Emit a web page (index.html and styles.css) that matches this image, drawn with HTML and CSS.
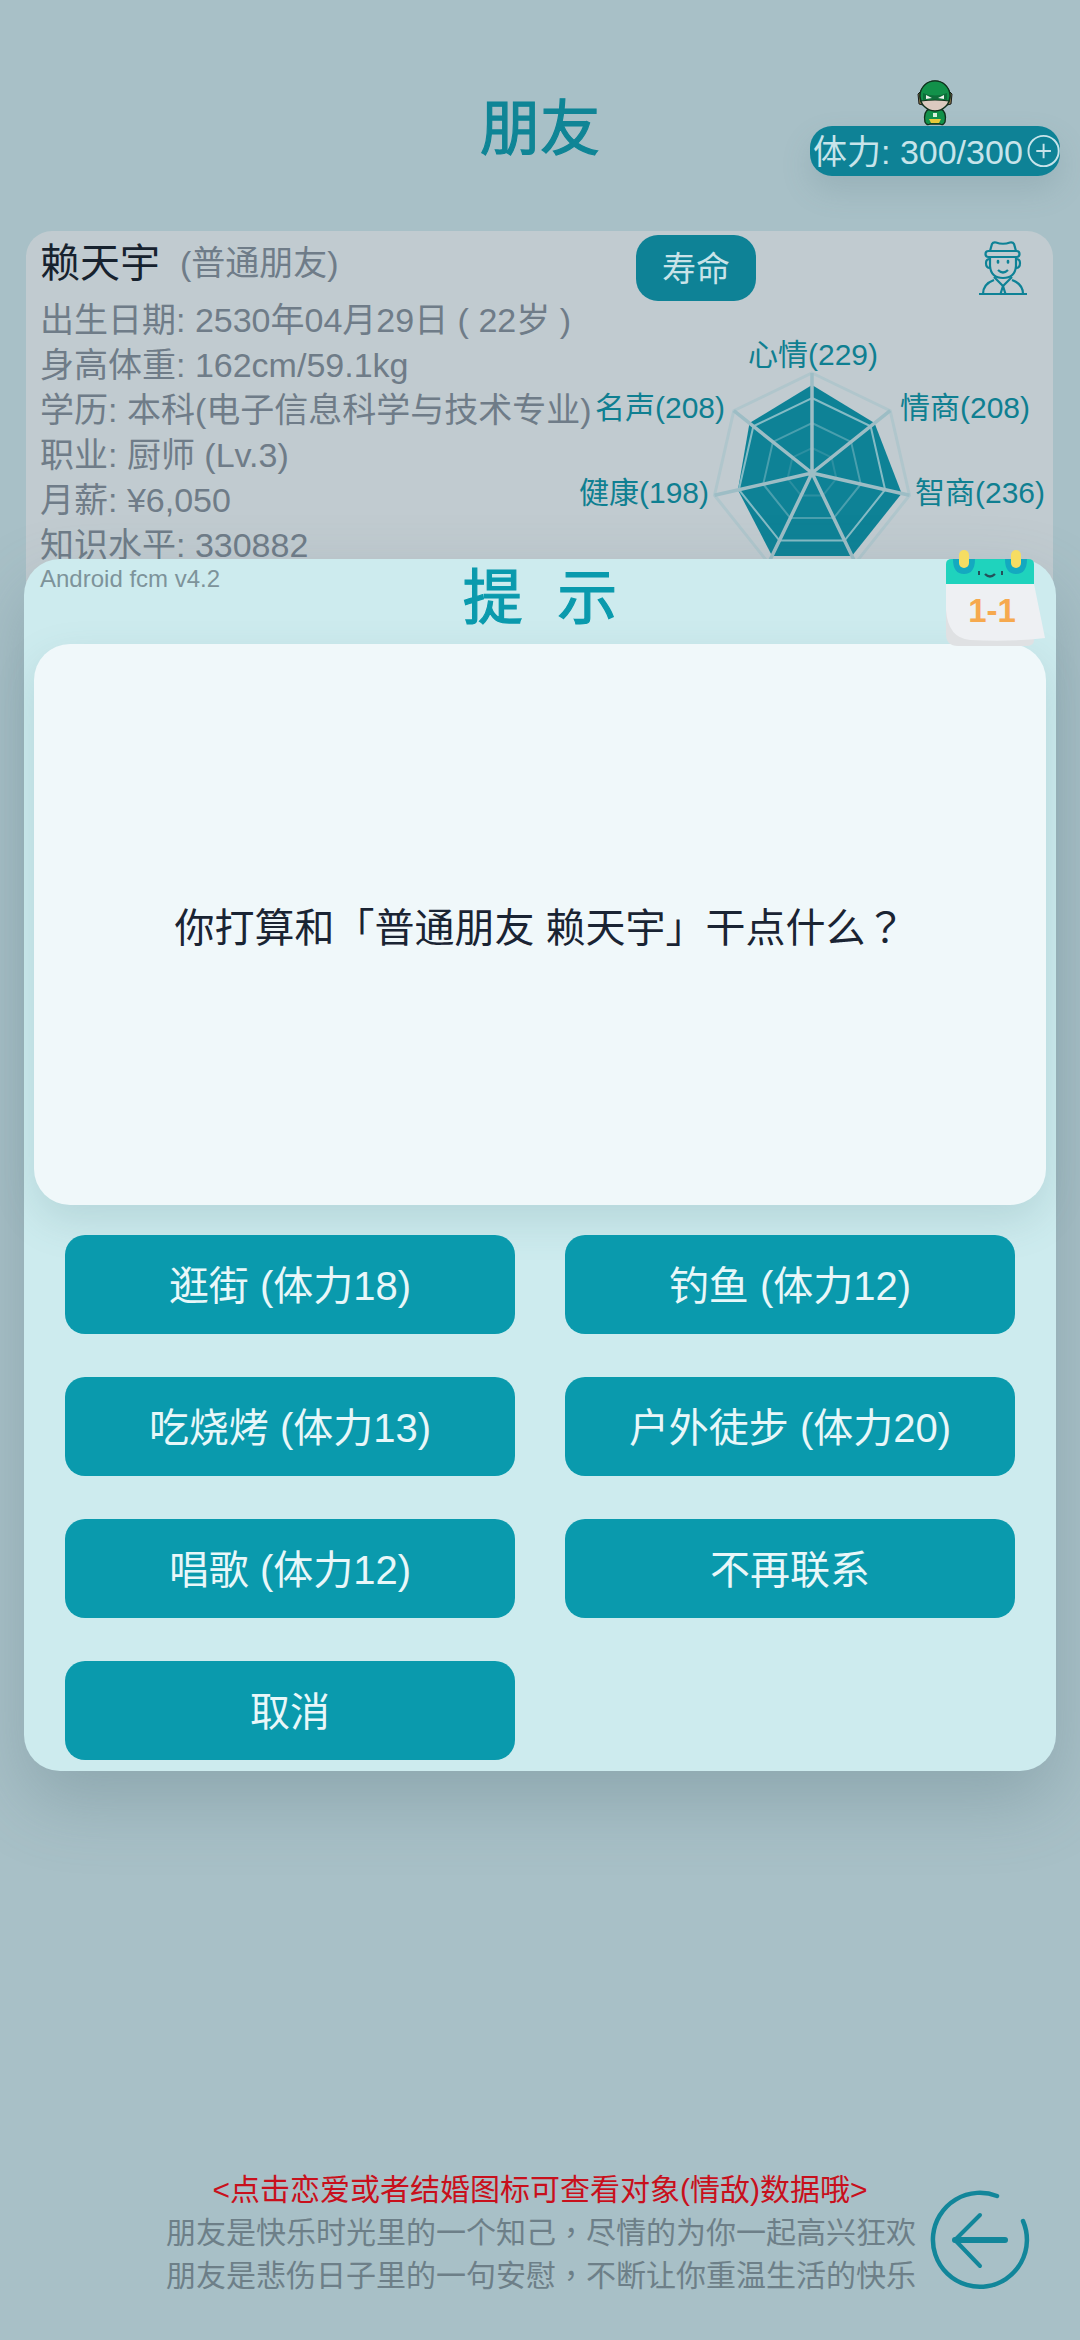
FILE: index.html
```html
<!DOCTYPE html>
<html lang="zh">
<head>
    <meta charset="UTF-8">
    <meta name="viewport" content="width=device-width, initial-scale=1.0">
    <title>朋友</title>
    <link rel="stylesheet" href="styles.css">
</head>
<body>
<div class="page">
    <!-- Header -->
    <header class="header">
        <h1 class="title">朋友</h1>
        <div class="stamina">
            <svg class="mascot" viewBox="0 0 36 46">
                <path d="M3 12 L1 14 L2 24 L6 25 Z M33 12 L35 14 L34 24 L30 25 Z" fill="#8a7a4a" stroke="#1a1a1a" stroke-width="1"/>
                <path d="M12 29 Q6 32 8 42 Q10 46 13 44 L23 44 Q26 46 28 42 Q30 32 24 29 Z" fill="#12914a" stroke="#10301c" stroke-width="1.4"/>
                <path d="M12 39 H24 L22 43 H14 Z" fill="#e8c93a"/>
                <rect x="16" y="33" width="4" height="4" fill="#d9f0dc"/>
                <circle cx="18" cy="16" r="15" fill="#dccabf" stroke="#10301c" stroke-width="1.4"/>
                <path d="M3 16 A15 15 0 0 1 33 16 L32 21 Q18 19 4 21 Z" fill="#12914a" stroke="#10301c" stroke-width="1.2"/>
                <path d="M6 13 Q18 18 30 13 L30 20 Q18 18 6 20 Z" fill="#0d6e3a"/>
                <path d="M9 15 L15 18 L9 19 Z M27 15 L21 18 L27 19 Z" fill="#eef4ee"/>
            </svg>
            <span class="stamina-text">体力: 300/300</span>
            <svg class="plus" viewBox="0 0 34 34">
                <circle cx="17" cy="17" r="15.5"/>
                <path d="M17 9.5 V24.5 M9.5 17 H24.5"/>
            </svg>
        </div>
    </header>

    <!-- Friend card, its lower part sits behind the dialog -->
    <section class="card">
        <div class="card-top">
            <span class="name">赖天宇</span>
            <span class="relation">(普通朋友)</span>
            <button class="life-btn">寿命</button>
            <svg class="avatar" viewBox="0 0 50 54">
                <path d="M12 10 L14 3 Q15 1 18 1.5 Q25 4 32 1.5 Q35 1 36 3 L38 10"/>
                <rect x="7.5" y="10" width="34" height="6" rx="3"/>
                <path d="M12 16 V25 Q13 37 25 37 Q37 37 38 25 V16"/>
                <path d="M12 18 Q8 18 8 22 Q8 27 12 27 M38 18 Q42 18 42 22 Q42 27 38 27"/>
                <path class="avatar-eyes" d="M20 20 V21.5 M30 20 V21.5"/>
                <path d="M20 29 Q25 34 30 29"/>
                <path d="M16 36 L25 45 L34 36"/>
                <path d="M1 53 H49 M5 53 Q5 43 16 39 M45 53 Q45 43 34 39"/>
                <path d="M25 45 L22.5 53 M25 45 L27.5 53"/>
            </svg>
        </div>
        <div class="info">
            <p>出生日期: 2530年04月29日 ( 22岁 )</p>
            <p>身高体重: 162cm/59.1kg</p>
            <p>学历: 本科(电子信息科学与技术专业)</p>
            <p>职业: 厨师 (Lv.3)</p>
            <p>月薪: ¥6,050</p>
            <p>知识水平: 330882</p>
        </div>

        <!-- Radar chart -->
        <div class="radar">
            <svg class="radar-svg" viewBox="-120 -120 240 240">
                <polygon class="radar-fill" points="0,-88 62.5,-49.9 89.7,20.5 39.9,82.9 -39.9,82.9 -74.1,16.9 -62.5,-49.9"/>
                <polygon class="ring ring-1" transform="scale(.25)" points="0,-100 78.2,-62.3 97.5,22.3 43.4,90.1 -43.4,90.1 -97.5,22.3 -78.2,-62.3"/>
                <polygon class="ring ring-2" transform="scale(.5)" points="0,-100 78.2,-62.3 97.5,22.3 43.4,90.1 -43.4,90.1 -97.5,22.3 -78.2,-62.3"/>
                <polygon class="ring ring-3" transform="scale(.75)" points="0,-100 78.2,-62.3 97.5,22.3 43.4,90.1 -43.4,90.1 -97.5,22.3 -78.2,-62.3"/>
                <polygon class="ring" points="0,-100 78.2,-62.3 97.5,22.3 43.4,90.1 -43.4,90.1 -97.5,22.3 -78.2,-62.3"/>
                <path class="spokes" d="M0 0 L0 -100 M0 0 L78.2 -62.3 M0 0 L97.5 22.3 M0 0 L43.4 90.1 M0 0 L-43.4 90.1 M0 0 L-97.5 22.3 M0 0 L-78.2 -62.3"/>
            </svg>
            <span class="radar-label label-top">心情(229)</span>
            <span class="radar-label label-right-up">情商(208)</span>
            <span class="radar-label label-right-low">智商(236)</span>
            <span class="radar-label label-left-low">健康(198)</span>
            <span class="radar-label label-left-up">名声(208)</span>
        </div>
    </section>

    <!-- Footer -->
    <footer class="footer">
        <div class="footer-text">
            <p class="hint">&lt;点击恋爱或者结婚图标可查看对象(情敌)数据哦&gt;</p>
            <p>朋友是快乐时光里的一个知己<span class="punct" lang="zh-Hant">，</span>尽情的为你一起高兴狂欢</p>
            <p>朋友是悲伤日子里的一句安慰<span class="punct" lang="zh-Hant">，</span>不断让你重温生活的快乐</p>
        </div>
        <svg class="back" viewBox="-50 -50 100 100">
            <path class="back-ring" d="M17 -44 A47 47 0 1 0 43 -19"/>
            <path class="back-head" d="M0 -25 L-25 0 L0 26"/>
            <path class="back-shaft" d="M-25 0 H25"/>
        </svg>
    </footer>

    <!-- Dialog -->
    <div class="dialog">
        <span class="version">Android fcm v4.2</span>
        <h2 class="dialog-title">提 示</h2>
        <svg class="calendar" viewBox="0 0 104 100">
            <path d="M4 30 H92 V90 Q92 96 84 96 H16 Q4 96 4 84 Z" fill="#dfe1e3"/>
            <path d="M4 34 H92 L103 88 Q70 92 28 90 Q6 88 4 60 Z" fill="#eef0f3"/>
            <path d="M4 14 Q4 9 10 9 H86 Q92 9 92 14 V34 H4 Z" fill="#1fd3bd"/>
            <path d="M11 9 H33 Q33 24 22 24 Q11 24 11 9 Z M63 9 H85 Q85 24 74 24 Q63 24 63 9 Z" fill="#14a9c0"/>
            <rect x="17" y="0" width="10" height="18" rx="5" fill="#f6dd62"/>
            <rect x="69" y="0" width="10" height="18" rx="5" fill="#f6dd62"/>
            <path d="M37 21 V25 M60 21 V25" stroke="#25505a" stroke-width="2"/>
            <path d="M43 24 Q48 29 53 24" stroke="#25505a" stroke-width="2.4" fill="none"/>
            <text class="calendar-date" x="50" y="72">1-1</text>
        </svg>
        <div class="message"><span>你打算和「普通朋友 赖天宇」干点什么<span class="punct" lang="zh-Hant">？</span></span></div>
        <div class="actions">
            <button class="action">逛街 (体力18)</button>
            <button class="action">钓鱼 (体力12)</button>
            <button class="action">吃烧烤 (体力13)</button>
            <button class="action">户外徒步 (体力20)</button>
            <button class="action">唱歌 (体力12)</button>
            <button class="action">不再联系</button>
            <button class="action">取消</button>
        </div>
    </div>
</div>
</body>
</html>
```

FILE: styles.css
```css
* {
    box-sizing: border-box;
}

body {
    margin: 0;
    font-family: "Liberation Sans", "Noto Sans CJK SC", sans-serif;
}

p {
    margin: 0;
}

/* fullwidth punctuation sits centred in its cell in the reference */
.punct {
    font-family: "Noto Sans CJK TC", sans-serif;
}

.page {
    position: relative;
    display: flex;
    flex-direction: column;
    width: 1080px;
    height: 2340px;
    overflow: hidden;
    background-color: #a8c0c7;
}

/* Header */
.header {
    display: flex;
    justify-content: flex-end;
    position: relative;
    height: 231px;
    padding: 126px 20px 0 0;
}

.title {
    position: absolute;
    left: 0;
    right: 0;
    top: 90px;
    margin: 0;
    text-align: center;
    font-size: 60px;
    line-height: 80px;
    font-weight: normal;
    -webkit-text-stroke: 1.2px #0f8596;
    color: #0f8596;
}

.stamina {
    position: relative;
    display: flex;
    align-items: center;
    width: 250px;
    height: 50px;
    padding-left: 3px;
    gap: 4px;
    border-radius: 22px;
    background-color: #0e8296;
    box-shadow: 0 14px 30px rgba(90, 120, 130, 0.2);
    font-size: 34px;
    white-space: nowrap;
    color: #c7e4ea;
}

.stamina-text {
    padding-bottom: 4px;
}

.mascot {
    position: absolute;
    left: 107px;
    top: -46px;
    width: 36px;
    height: 46px;
}

.plus {
    width: 34px;
    height: 34px;
    fill: none;
    stroke: #c7e4ea;
    stroke-width: 2;
}

/* Card */
.card {
    position: relative;
    width: 1027px;
    height: 400px;
    margin-left: 26px;
    padding: 4px 25px 0 14px;
    border-radius: 26px;
    background-color: #c1cbd0;
}

.card-top {
    display: flex;
    height: 66px;
}

.name {
    margin-top: -3px;
    font-size: 40px;
    line-height: 62px;
    color: #17222e;
}

.relation {
    margin: -3px 0 0 20px;
    font-size: 34px;
    line-height: 62px;
    color: #6f7c88;
}

.life-btn {
    width: 120px;
    height: 66px;
    margin-left: auto;
    padding: 0 0 4px;
    border: none;
    border-radius: 22px;
    background-color: #0e8296;
    color: #c9e3e8;
    font-family: inherit;
    font-size: 34px;
}

.avatar {
    width: 50px;
    height: 54px;
    margin: 6px 0 0 222px;
    fill: none;
    stroke: #0e8296;
    stroke-width: 2.2;
}

.avatar-eyes {
    stroke-width: 2.6;
    stroke-linecap: round;
}

.info {
    margin-top: -3px;
    font-size: 34px;
    line-height: 45px;
    white-space: nowrap;
    color: #6f7c88;
}

/* Radar */
.radar {
    position: absolute;
    left: 666px;
    top: 122px;
    width: 240px;
    height: 240px;
}

.radar-svg {
    display: block;
    width: 240px;
    height: 240px;
}

.radar-fill {
    fill: #0e8296;
}

.ring {
    fill: none;
    stroke: #b0c6cc;
    stroke-width: 3;
    vector-effect: non-scaling-stroke;
}

.ring-1 {
    stroke: #2c8fa1;
    stroke-width: 2;
}

.ring-2 {
    stroke: #4a9fae;
    stroke-width: 2;
}

.ring-3 {
    stroke: #85bbc5;
    stroke-width: 2;
}

.spokes {
    fill: none;
    stroke: #9dbdc5;
    stroke-width: 3.5;
}

.radar-label {
    position: absolute;
    font-size: 30px;
    line-height: 36px;
    white-space: nowrap;
    color: #0f7f91;
}

.label-top {
    left: 56px;
    top: -16px;
}

.label-right-up {
    left: 208px;
    top: 37px;
}

.label-right-low {
    left: 223px;
    top: 122px;
}

.label-left-low {
    left: -113px;
    top: 122px;
}

.label-left-up {
    left: -97px;
    top: 37px;
}

/* Footer */
.footer {
    display: flex;
    align-items: center;
    margin-top: auto;
    padding: 0 0 44px 166px;
}

.footer-text {
    width: 748px;
    text-align: center;
    font-size: 30px;
    line-height: 40px;
    white-space: nowrap;
    color: #6d7f88;
}

.hint {
    color: #c8101c;
}

.back {
    width: 100px;
    height: 100px;
    margin: 14px 0 0 16px;
    fill: none;
    stroke: #12869a;
    stroke-linecap: round;
}

.back-ring {
    stroke-width: 4.5;
}

.back-head {
    stroke-width: 4;
    stroke-linejoin: round;
}

.back-shaft {
    stroke-width: 6;
}

/* Dialog */
.dialog {
    position: absolute;
    left: 24px;
    top: 559px;
    width: 1032px;
    height: 1212px;
    padding: 85px 10px 0;
    border-radius: 36px;
    background-color: #cdebee;
    box-shadow: 0 30px 70px rgba(80, 110, 120, 0.3);
}

.version {
    position: absolute;
    left: 16px;
    top: 6px;
    font-size: 24px;
    line-height: 28px;
    color: #7d939a;
}

.dialog-title {
    position: absolute;
    left: 0;
    right: 0;
    top: 2px;
    margin: 0;
    text-align: center;
    font-size: 60px;
    line-height: 76px;
    font-weight: normal;
    word-spacing: 18px;
    -webkit-text-stroke: 1.2px #0a9aad;
    color: #0a9aad;
}

.calendar {
    position: absolute;
    left: 918px;
    top: -9px;
    width: 104px;
    height: 100px;
    z-index: 1;
}

.calendar-date {
    font-size: 33px;
    font-weight: bold;
    text-anchor: middle;
    fill: #f6a94e;
}

.message {
    display: flex;
    align-items: center;
    justify-content: center;
    height: 561px;
    border-radius: 36px;
    background-color: #f0f8fa;
    box-shadow: 0 16px 40px rgba(80, 120, 130, 0.18);
    font-size: 40px;
    color: #1a2433;
}

.actions {
    display: grid;
    grid-template-columns: 450px 450px;
    grid-auto-rows: 99px;
    gap: 43px 50px;
    margin: 30px 0 0 31px;
}

.action {
    padding: 0 0 4px;
    border: none;
    border-radius: 20px;
    background-color: #0a9aad;
    color: #e8f7f9;
    font-family: inherit;
    font-size: 40px;
}
```
